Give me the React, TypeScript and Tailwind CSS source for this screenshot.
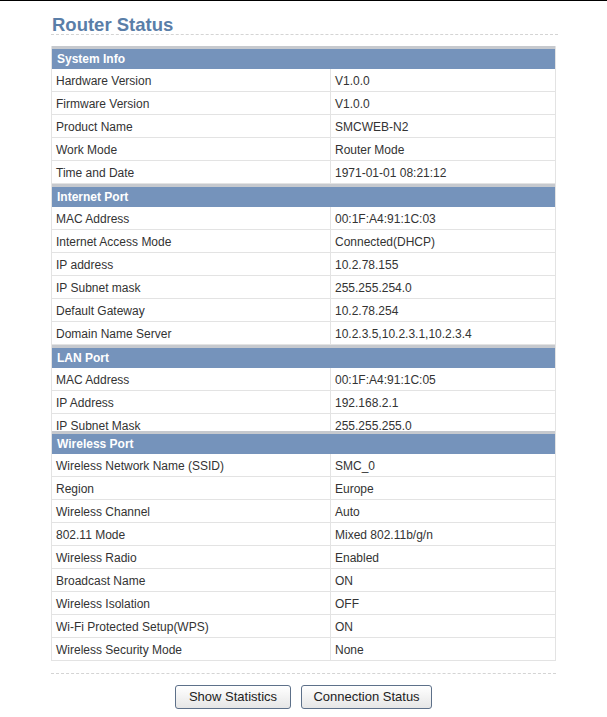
import React from "react";

type Row = [string, string];

const sections: { title: string; rows: Row[]; clip?: boolean }[] = [
  {
    title: "System Info",
    rows: [
      ["Hardware Version", "V1.0.0"],
      ["Firmware Version", "V1.0.0"],
      ["Product Name", "SMCWEB-N2"],
      ["Work Mode", "Router Mode"],
      ["Time and Date", "1971-01-01 08:21:12"],
    ],
  },
  {
    title: "Internet Port",
    rows: [
      ["MAC Address", "00:1F:A4:91:1C:03"],
      ["Internet Access Mode", "Connected(DHCP)"],
      ["IP address", "10.2.78.155"],
      ["IP Subnet mask", "255.255.254.0"],
      ["Default Gateway", "10.2.78.254"],
      ["Domain Name Server", "10.2.3.5,10.2.3.1,10.2.3.4"],
    ],
  },
  {
    title: "LAN Port",
    clip: true,
    rows: [
      ["MAC Address", "00:1F:A4:91:1C:05"],
      ["IP Address", "192.168.2.1"],
      ["IP Subnet Mask", "255.255.255.0"],
    ],
  },
  {
    title: "Wireless Port",
    rows: [
      ["Wireless Network Name (SSID)", "SMC_0"],
      ["Region", "Europe"],
      ["Wireless Channel", "Auto"],
      ["802.11 Mode", "Mixed 802.11b/g/n"],
      ["Wireless Radio", "Enabled"],
      ["Broadcast Name", "ON"],
      ["Wireless Isolation", "OFF"],
      ["Wi-Fi Protected Setup(WPS)", "ON"],
      ["Wireless Security Mode", "None"],
    ],
  },
];

function Section({ title, rows, clip }: { title: string; rows: Row[]; clip?: boolean }) {
  return (
    <div className={clip ? "h-[86px] overflow-hidden" : ""}>
      <div className="border-t-[3px] border-[#c6c9ce] bg-[#7593bb] h-[23px] leading-[20px] px-[5px] text-white font-bold text-[12px]">
        {title}
      </div>
      {rows.map(([k, v]) => (
        <div key={k} className="grid grid-cols-[279px_1fr] h-[23px] border-b border-[#e3e3e3] text-[12px] leading-[21px] text-[#333]">
          <div className="px-[4px] pt-[2px] border-r border-[#e3e3e3] whitespace-nowrap">{k}</div>
          <div className="px-[4px] pt-[2px] whitespace-nowrap">{v}</div>
        </div>
      ))}
    </div>
  );
}

export default function App() {
  return (
    <div
      className="w-[607px] h-[717px] bg-white border-t border-black overflow-hidden"
      style={{ fontFamily: '"Liberation Sans", Arial, sans-serif' }}
    >
      <div className="ml-[51px] w-[507px]">
        <div className="mt-[13px] h-[21px] leading-[21px] border-b border-dashed border-[#d4d4d4] text-[18.5px] font-bold text-[#5a7ea8] pl-[1px]">
          Router Status
        </div>
        <div className="mt-[11px] w-[505px] border-x border-[#e3e3e3]">
          {sections.map((s) => (
            <Section key={s.title} title={s.title} rows={s.rows} clip={s.clip} />
          ))}
        </div>
        <div className="mt-[12px] w-[505px] border-t border-dashed border-[#d4d4d4]" />
        <div className="mt-[11px] w-[505px] flex justify-center gap-[10px]">
          <button className="w-[116px] h-[24px] rounded-[3px] border border-[#5d7089] bg-gradient-to-b from-white to-[#e6e6e6] text-[13px] text-[#222] leading-[22px]">
            Show Statistics
          </button>
          <button className="w-[131px] h-[24px] rounded-[3px] border border-[#5d7089] bg-gradient-to-b from-white to-[#e6e6e6] text-[13px] text-[#222] leading-[22px]">
            Connection Status
          </button>
        </div>
      </div>
    </div>
  );
}
